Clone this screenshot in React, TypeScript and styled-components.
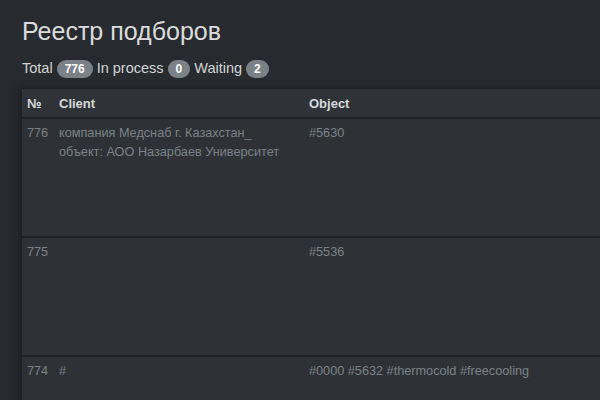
import React from "react";
import styled, { createGlobalStyle } from "styled-components";

const Global = createGlobalStyle`
  html, body { margin: 0; padding: 0; background: #272b30; overflow: hidden; }
  body { font-family: "Liberation Sans", Arial, sans-serif; color: #c8c8c8; }
`;

const Page = styled.div`
  padding: 17px 0 0 22px;
  width: 800px;
`;

const Title = styled.h1`
  margin: 0;
  font-size: 25px;
  line-height: 29px;
  font-weight: 400;
  color: #dcdcdc;
`;

const Summary = styled.div`
  margin-top: 12px;
  font-size: 14.5px;
  line-height: 20px;
  color: #d4d4d4;
  display: flex;
  align-items: center;
  gap: 4px;
`;

const Badge = styled.span`
  display: inline-block;
  background: #7a8288;
  color: #fff;
  font-weight: 700;
  font-size: 12px;
  line-height: 18px;
  height: 18px;
  padding: 0 8px;
  border-radius: 9px;
  margin-top: 2px;
`;

const Table = styled.table`
  margin-top: 11px;
  border-collapse: collapse;
  table-layout: fixed;
  width: 720px;
  background: #2e3236;
  box-shadow: -3px 0 8px rgba(0, 0, 0, 0.35);
  font-size: 12.7px;
`;

const HeadCell = styled.th<{ $w: number }>`
  width: ${(p) => p.$w}px;
  text-align: left;
  font-weight: 700;
  font-size: 13px;
  color: #d6d9dc;
  padding: 0 5px;
  height: 28px;
  background: #2f3338;
  border-bottom: 2px solid #1f2226;
`;

const Row = styled.tr`
  height: 119px;
  border-top: 2px solid #1f2226;
`;

const Cell = styled.td`
  vertical-align: top;
  padding: 5px 5px 5px;
  line-height: 19px;
  color: #7a8288;
`;

const rows = [
  { n: "776", client: ["компания Медснаб г. Казахстан_", "объект: АОО Назарбаев Университет"], obj: "#5630" },
  { n: "775", client: [], obj: "#5536" },
  { n: "774", client: ["#"], obj: "#0000 #5632 #thermocold #freecooling" },
];

export default function App() {
  return (
    <>
      <Global />
      <Page>
        <Title>Реестр подборов</Title>
        <Summary>
          Total <Badge>776</Badge> In process <Badge>0</Badge> Waiting <Badge>2</Badge>
        </Summary>
        <Table>
          <thead>
            <tr>
              <HeadCell $w={22}>№</HeadCell>
              <HeadCell $w={240}>Client</HeadCell>
              <HeadCell $w={428}>Object</HeadCell>
            </tr>
          </thead>
          <tbody>
            {rows.map((r) => (
              <Row key={r.n}>
                <Cell>{r.n}</Cell>
                <Cell>
                  {r.client.map((l, i) => (
                    <div key={i}>{l}</div>
                  ))}
                </Cell>
                <Cell>{r.obj}</Cell>
              </Row>
            ))}
          </tbody>
        </Table>
      </Page>
    </>
  );
}
